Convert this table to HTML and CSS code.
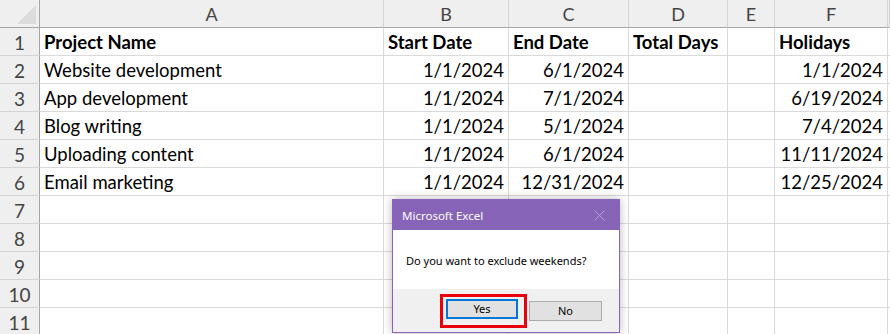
FILE: index.html
```html
<!DOCTYPE html>
<html lang="en">
<head>
    <meta charset="UTF-8">
    <meta name="viewport" content="width=device-width, initial-scale=1.0">
    <title>Total Days</title>
    <link rel="stylesheet" href="styles.css">
</head>
<body>
    <div class="sheet">
        <div class="row head">
            <div class="corner"><span class="tri"></span></div>
            <div class="col">A</div>
            <div class="col">B</div>
            <div class="col">C</div>
            <div class="col">D</div>
            <div class="col">E</div>
            <div class="col">F</div>
            <div class="col"></div>
        </div>
        <div class="row">
            <div class="num">1</div>
            <div class="cell bold">Project Name</div>
            <div class="cell bold">Start Date</div>
            <div class="cell bold">End Date</div>
            <div class="cell bold">Total Days</div>
            <div class="cell"></div>
            <div class="cell bold">Holidays</div>
            <div class="cell"></div>
        </div>
        <div class="row">
            <div class="num">2</div>
            <div class="cell">Website development</div>
            <div class="cell date">1/1/2024</div>
            <div class="cell date">6/1/2024</div>
            <div class="cell"></div>
            <div class="cell"></div>
            <div class="cell date">1/1/2024</div>
            <div class="cell"></div>
        </div>
        <div class="row">
            <div class="num">3</div>
            <div class="cell">App development</div>
            <div class="cell date">1/1/2024</div>
            <div class="cell date">7/1/2024</div>
            <div class="cell"></div>
            <div class="cell"></div>
            <div class="cell date">6/19/2024</div>
            <div class="cell"></div>
        </div>
        <div class="row">
            <div class="num">4</div>
            <div class="cell">Blog writing</div>
            <div class="cell date">1/1/2024</div>
            <div class="cell date">5/1/2024</div>
            <div class="cell"></div>
            <div class="cell"></div>
            <div class="cell date">7/4/2024</div>
            <div class="cell"></div>
        </div>
        <div class="row">
            <div class="num">5</div>
            <div class="cell">Uploading content</div>
            <div class="cell date">1/1/2024</div>
            <div class="cell date">6/1/2024</div>
            <div class="cell"></div>
            <div class="cell"></div>
            <div class="cell date">11/11/2024</div>
            <div class="cell"></div>
        </div>
        <div class="row">
            <div class="num">6</div>
            <div class="cell">Email marketing</div>
            <div class="cell date">1/1/2024</div>
            <div class="cell date">12/31/2024</div>
            <div class="cell"></div>
            <div class="cell"></div>
            <div class="cell date">12/25/2024</div>
            <div class="cell"></div>
        </div>
        <div class="row">
            <div class="num">7</div>
            <div class="cell"></div><div class="cell"></div><div class="cell"></div><div class="cell"></div>
            <div class="cell"></div><div class="cell"></div><div class="cell"></div>
        </div>
        <div class="row">
            <div class="num">8</div>
            <div class="cell"></div><div class="cell"></div><div class="cell"></div><div class="cell"></div>
            <div class="cell"></div><div class="cell"></div><div class="cell"></div>
        </div>
        <div class="row">
            <div class="num">9</div>
            <div class="cell"></div><div class="cell"></div><div class="cell"></div><div class="cell"></div>
            <div class="cell"></div><div class="cell"></div><div class="cell"></div>
        </div>
        <div class="row">
            <div class="num">10</div>
            <div class="cell"></div><div class="cell"></div><div class="cell"></div><div class="cell"></div>
            <div class="cell"></div><div class="cell"></div><div class="cell"></div>
        </div>
        <div class="row">
            <div class="num">11</div>
            <div class="cell"></div><div class="cell"></div><div class="cell"></div><div class="cell"></div>
            <div class="cell"></div><div class="cell"></div><div class="cell"></div>
        </div>

        <!-- message box shown over the sheet -->
        <div class="msgbox">
            <div class="msg-title">
                <span>Microsoft Excel</span>
                <svg class="msg-close" width="11" height="11" viewBox="0 0 11 11">
                    <path d="M0.5 0.5 L10.5 10.5 M10.5 0.5 L0.5 10.5" stroke="#b29ed3" stroke-width="1" fill="none"/>
                </svg>
            </div>
            <div class="msg-body">Do you want to exclude weekends?</div>
            <div class="msg-footer">
                <div class="highlight">
                    <button class="btn btn-focus">Yes</button>
                </div>
                <button class="btn">No</button>
            </div>
        </div>
    </div>
</body>
</html>
```

FILE: styles.css
```css
body {
    margin: 0;
    background: #fff;
    overflow: hidden;
}

.sheet {
    position: relative;
    width: 890px;
    height: 334px;
    font-family: 'Lato', 'Liberation Sans', sans-serif;
    color: #000;
}

.row {
    display: grid;
    grid-template-columns: 40px 344px 125px 120px 99px 47px 113px 1fr;
    height: 28px;
}

.row > div {
    box-sizing: border-box;
    height: 28px;
    border-right: 1px solid #dadada;
    border-bottom: 1px solid #dadada;
}

/* column letters */
.head > div {
    background: #efefef;
    border-right-color: #d4d4d4;
    border-bottom-color: #a6a6a6;
}

.col {
    display: flex;
    align-items: center;
    justify-content: center;
    font-size: 18px;
    color: #444;
}

.corner {
    position: relative;
}

.head .corner {
    border-right-color: #a6a6a6;
}

.tri {
    position: absolute;
    left: 17px;
    top: 5px;
    width: 0;
    height: 0;
    border-left: 19px solid transparent;
    border-bottom: 19px solid #dcdcdc;
}

/* row numbers */
.num {
    display: flex;
    align-items: center;
    justify-content: center;
    padding-top: 2px;
    background: #efefef;
    font-size: 19px;
    color: #444;
    border-right-color: #a6a6a6 !important;
    border-bottom-color: #d4d4d4 !important;
}

.cell {
    display: flex;
    align-items: flex-end;
    padding: 0 4px 2px 4px;
    font-size: 18.5px;
    white-space: nowrap;
    overflow: visible;
}

.bold {
    font-weight: bold;
}

.date {
    justify-content: flex-end;
}

/* Microsoft Excel message box */
.msgbox {
    position: absolute;
    left: 392px;
    top: 199px;
    width: 228px;
    height: 134px;
    box-sizing: border-box;
    border: 1px solid #8764b8;
    background: #fff;
    box-shadow: 0 0 9px rgba(0, 0, 0, 0.28);
    font-family: 'Noto Sans', 'Open Sans', sans-serif;
    font-size: 11px;
    display: flex;
    flex-direction: column;
}

.msg-title {
    height: 30px;
    background: #8764b8;
    color: #fff;
    display: flex;
    align-items: center;
    justify-content: space-between;
    padding: 0 14px 0 9px;
    font-size: 11.5px;
}

.msg-close {
    display: block;
}

.msg-body {
    height: 59px;
    display: flex;
    align-items: center;
    padding: 2px 0 0 13px;
    box-sizing: border-box;
    color: #000;
}

.msg-footer {
    flex: 1;
    background: #f0f0f0;
    display: flex;
    align-items: center;
    padding-left: 47px;
    gap: 2px;
}

.highlight {
    border: 3px solid #e8000b;
    padding: 2px 6px 6px 3px;
    display: flex;
}

.btn {
    width: 73px;
    height: 20px;
    box-sizing: border-box;
    background: #e1e1e1;
    border: 1px solid #adadad;
    font-family: 'Noto Sans', 'Open Sans', sans-serif;
    font-size: 11px;
    color: #000;
    padding: 0;
    margin: 0;
}

.btn-focus {
    width: 72px;
    border: 2px solid #0078d7;
}
```
